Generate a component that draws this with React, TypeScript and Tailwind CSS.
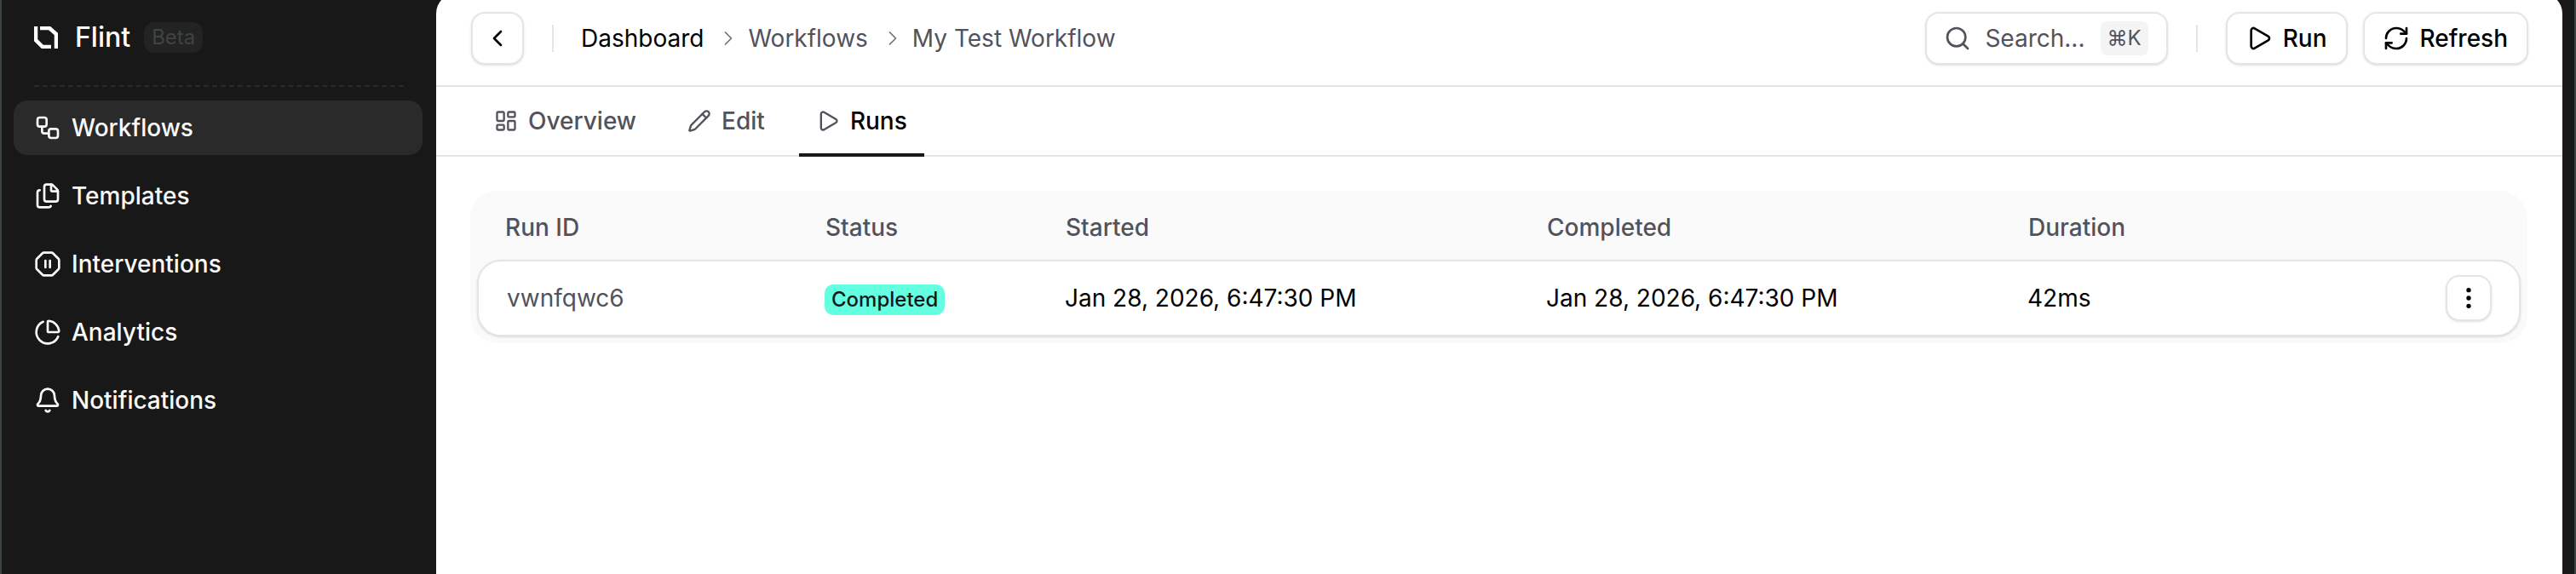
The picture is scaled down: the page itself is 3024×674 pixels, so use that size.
import {
  ChartPie,
  ChevronLeft,
  ChevronRight,
  EllipsisVertical,
  Bell,
  Files,
  LayoutDashboard,
  OctagonPause,
  Pencil,
  Play,
  RefreshCw,
  Search,
  Workflow,
} from "lucide-react";

const navItems = [
  { label: "Workflows", icon: Workflow, active: true },
  { label: "Templates", icon: Files },
  { label: "Interventions", icon: OctagonPause },
  { label: "Analytics", icon: ChartPie },
  { label: "Notifications", icon: Bell },
];

const tabs = [
  { label: "Overview", icon: LayoutDashboard },
  { label: "Edit", icon: Pencil },
  { label: "Runs", icon: Play, active: true },
];

function Logo() {
  return (
    <svg width="28" height="26" viewBox="0 0 28 26" fill="none" stroke="white" strokeWidth="4.5">
      <path d="M2 0V16L10 24H20" />
      <path d="M7 2H18L26 9V26" />
    </svg>
  );
}

function Sidebar() {
  return (
    <aside className="w-[510px] shrink-0">
      <div className="h-[88px] flex items-center pl-[38px]">
        <Logo />
        <span className="ml-[20px] text-[32px] font-medium text-white">Flint</span>
        <span className="ml-[16px] px-[9px] h-[36px] flex items-center rounded-xl bg-[#232323] text-[24px] text-[#3d4443]">
          Beta
        </span>
      </div>
      <div className="mx-[38px] mt-3 border-t-2 border-dashed border-[#2a2a2a]" />
      <nav className="mt-4 ml-[14px] w-[480px] flex flex-col gap-4">
        {navItems.map((item) => (
          <div
            key={item.label}
            className={`h-16 pl-6 flex items-center gap-3 rounded-2xl text-[28px] font-medium text-[#fafafa] ${
              item.active ? "bg-[#2a2a2a]" : ""
            }`}
          >
            <item.icon size={32} strokeWidth={2} />
            {item.label}
          </div>
        ))}
      </nav>
    </aside>
  );
}

function Topbar() {
  return (
    <header className="h-[110px] pt-[22px] pl-[41px] pr-10 flex items-start border-b-2 border-[#e5e5e5] text-[28px]">
      <button className="w-[62px] h-[62px] flex items-center justify-center rounded-2xl border-2 border-[#e5e5e5] bg-white shadow-sm text-black">
        <ChevronLeft size={32} />
      </button>
      <div className="ml-[33px] mt-[15px] h-8 w-0.5 bg-[#e5e5e5]" />
      <nav className="ml-[32px] h-[62px] flex items-center text-[#52525b]">
        <span className="text-black">Dashboard</span>
        <ChevronRight size={28} strokeWidth={1.5} className="ml-[15px] mr-[9px] text-[#71717a]" />
        <span>Workflows</span>
        <ChevronRight size={28} strokeWidth={1.5} className="ml-[15px] mr-[9px] text-[#71717a]" />
        <span>My Test Workflow</span>
      </nav>
      <div className="ml-auto flex items-start">
        <div className="h-[62px] pl-5 pr-[21px] flex items-center rounded-2xl border-2 border-[#e5e5e5] bg-white shadow-sm text-[#52525b]">
          <Search size={32} />
          <span className="ml-4">Search...</span>
          <span className="ml-[18px] h-10 px-2 flex items-center rounded-lg bg-[#f4f4f5] text-[24px]">⌘K</span>
        </div>
        <div className="mx-[33px] mt-[15px] h-8 w-0.5 bg-[#e5e5e5]" />
        <button className="h-[62px] pl-[21px] pr-[22px] flex items-center gap-3 rounded-2xl border-2 border-[#e5e5e5] bg-white shadow-sm font-medium text-black">
          <Play size={32} />
          Run
        </button>
        <button className="ml-[18px] h-[62px] pl-[21px] pr-[22px] flex items-center gap-3 rounded-2xl border-2 border-[#e5e5e5] bg-white shadow-sm font-medium text-black">
          <RefreshCw size={32} />
          Refresh
        </button>
      </div>
    </header>
  );
}

function Tabs() {
  return (
    <div className="h-[82px] pl-12 flex gap-5 border-b-2 border-[#e5e5e5] text-[28px] font-medium">
      {tabs.map((tab) => (
        <div
          key={tab.label}
          className={`relative px-5 flex items-center gap-3 ${tab.active ? "text-black" : "text-[#52525b]"}`}
        >
          <tab.icon size={28} className={tab.active ? "text-[#52525b]" : ""} />
          {tab.label}
          {tab.active && <div className="absolute left-0 right-0 -bottom-0.5 h-1 bg-[#181818]" />}
        </div>
      ))}
    </div>
  );
}

function RunsTable() {
  return (
    <div className="mt-10 ml-10 mr-[41px] rounded-[32px] bg-[#fafafa] text-[28px]">
      <div className="grid grid-cols-[376px_282px_565px_565px_1fr] items-center h-[81px] pt-1 pl-[41px] text-[#52525b] font-medium">
        <span>Run ID</span>
        <span>Status</span>
        <span>Started</span>
        <span>Completed</span>
        <span>Duration</span>
      </div>
      <div className="grid grid-cols-[373px_282px_565px_565px_1fr] items-center h-[90px] mx-2 pl-[33px] rounded-[28px] border-2 border-[#e5e5e5] bg-white shadow-sm text-black">
        <span className="text-[#52525b]">vwnfqwc6</span>
        <span>
          <span className="inline-flex h-9 px-2 items-center rounded-[10px] bg-[#64ffe0] text-[24px] font-medium text-[#18181b]">
            Completed
          </span>
        </span>
        <span>Jan 28, 2026, 6:47:30 PM</span>
        <span>Jan 28, 2026, 6:47:30 PM</span>
        <div className="flex items-center justify-between pr-8">
          <span>42ms</span>
          <button className="w-[54px] h-[54px] flex items-center justify-center rounded-2xl border-2 border-[#e5e5e5] bg-white shadow-sm">
            <EllipsisVertical size={32} />
          </button>
        </div>
      </div>
      <div className="h-2" />
    </div>
  );
}

export default function App() {
  return (
    <div className="h-[674px] flex overflow-hidden border-x-2 border-[#3a4442] bg-[#181818] font-['Inter',sans-serif]">
      <Sidebar />
      <main className="flex-1 -mt-2 mr-3.5 rounded-t-3xl bg-white">
        <Topbar />
        <Tabs />
        <RunsTable />
      </main>
    </div>
  );
}
